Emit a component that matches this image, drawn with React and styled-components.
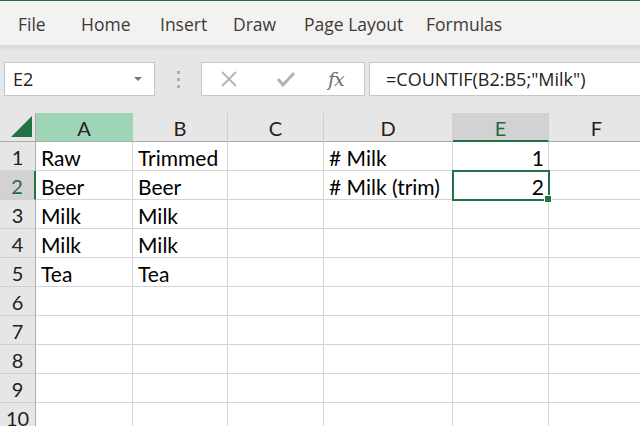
import React from "react";
import styled, { createGlobalStyle } from "styled-components";

const Global = createGlobalStyle`
  html, body { margin: 0; padding: 0; overflow: hidden; background: #fff; }
  body { font-family: "Open Sans", "Noto Sans", sans-serif; }
`;

const GREEN = "#217346";
const UI_FONT = `"Open Sans", "Noto Sans", sans-serif`;
const CELL_FONT = `Lato, "Liberation Sans", sans-serif`;

const Page = styled.div`
  width: 640px;
  height: 426px;
  overflow: hidden;
  display: flex;
  flex-direction: column;
`;

const Ribbon = styled.div`
  height: 44px;
  border-top: 1px solid ${GREEN};
  background: #f3f2f1;
  display: flex;
  align-items: center;
  padding-left: 18px;
  flex-shrink: 0;
`;

const Tab = styled.div`
  font-family: ${UI_FONT};
  font-size: 17.5px;
  color: #3b3a39;
  width: ${(p) => p.w}px;
  white-space: nowrap;
  padding-top: 2px;
`;

const Shade = styled.div`
  height: 5px;
  background: linear-gradient(#d6d6d6, #e3e3e3);
  flex-shrink: 0;
`;

const FormulaArea = styled.div`
  height: 63px;
  background: #e6e6e6;
  display: flex;
  align-items: flex-start;
  padding: 12px 0 0 4px;
  box-sizing: border-box;
  flex-shrink: 0;
`;

const Box = styled.div`
  height: 34px;
  box-sizing: border-box;
  background: #fff;
  border: 1px solid #c6c6c6;
  display: flex;
  align-items: center;
`;

const NameBox = styled(Box)`
  width: 151px;
  padding: 0 12px 0 8px;
  justify-content: space-between;
  font-family: ${UI_FONT};
  font-size: 18px;
  color: #222;
`;

const Caret = styled.div`
  width: 0;
  height: 0;
  border-left: 4px solid transparent;
  border-right: 4px solid transparent;
  border-top: 4px solid #777;
`;

const Dots = styled.div`
  width: 46px;
  height: 34px;
  display: flex;
  flex-direction: column;
  align-items: center;
  justify-content: center;
  gap: 4px;
  span {
    width: 3px;
    height: 3px;
    background: #acacac;
  }
`;

const FnBox = styled(Box)`
  width: 164px;
  padding-left: 18px;
`;

const IconSlot = styled.div`
  width: ${(p) => p.w}px;
  display: flex;
  align-items: center;
  justify-content: flex-start;
`;

const Fx = styled.span`
  font-family: "DejaVu Serif", "Liberation Serif", serif;
  font-style: italic;
  font-size: 19px;
  color: #6e6e6e;
  letter-spacing: -1px;
`;

const Input = styled(Box)`
  margin-left: 4px;
  flex: 1;
  border-right: none;
  padding-left: 16px;
  font-family: ${UI_FONT};
  font-size: 18px;
  color: #222;
  white-space: nowrap;
`;

const Grid = styled.div`
  display: grid;
  grid-template-columns: 36px 97px 95px 96px 129px 96px 96px;
  grid-auto-rows: 29px;
  grid-template-rows: 29px;
`;

const Corner = styled.div`
  background: #e6e6e6;
  border-right: 1px solid #ababab;
  border-bottom: 1px solid #ababab;
  box-sizing: border-box;
  display: flex;
  align-items: flex-end;
  justify-content: flex-end;
  padding: 0 3px 4px 0;
`;

const ColHead = styled.div`
  background: ${(p) => (p.active ? "#d2d2d2" : p.hl ? "#9fd5b7" : "#e6e6e6")};
  border-right: 1px solid ${(p) => (p.hl ? "#9fd5b7" : "#d0d0d0")};
  border-bottom: ${(p) => (p.active ? `2px solid ${GREEN}` : "1px solid #ababab")};
  box-sizing: border-box;
  display: flex;
  align-items: center;
  justify-content: center;
  font-family: ${CELL_FONT};
  font-size: 20px;
  color: ${(p) => (p.active ? "#1e6b40" : "#222")};
  padding-top: 2px;
`;

const RowHead = styled.div`
  background: ${(p) => (p.active ? "#d2d2d2" : "#e6e6e6")};
  border-right: ${(p) => (p.active ? `2px solid ${GREEN}` : "1px solid #ababab")};
  border-bottom: 1px solid #d0d0d0;
  box-sizing: border-box;
  display: flex;
  align-items: center;
  justify-content: center;
  font-family: ${CELL_FONT};
  font-size: 20px;
  color: ${(p) => (p.active ? "#1e6b40" : "#222")};
  padding-top: 2px;
`;

const Cell = styled.div`
  position: relative;
  border-right: 1px solid #d4d4d4;
  border-bottom: 1px solid #d4d4d4;
  box-sizing: border-box;
  display: flex;
  align-items: center;
  justify-content: ${(p) => (p.num ? "flex-end" : "flex-start")};
  padding: 2px ${(p) => (p.num ? 4 : 0)}px 0 ${(p) => (p.num ? 0 : 5)}px;
  font-family: ${CELL_FONT};
  font-size: 21px;
  color: #000;
  white-space: nowrap;
  ${(p) =>
    p.selected &&
    `
    outline: 2px solid ${GREEN};
    outline-offset: -1px;
    z-index: 2;
  `}
`;

const Handle = styled.div`
  position: absolute;
  right: -4px;
  bottom: -4px;
  width: 6px;
  height: 6px;
  background: ${GREEN};
  border: 1px solid #fff;
`;

const data = [
  ["Raw", "Trimmed", "", "# Milk", 1, ""],
  ["Beer", "Beer", "", "# Milk (trim)", 2, ""],
  ["Milk", "Milk", "", "", "", ""],
  ["Milk", "Milk", "", "", "", ""],
  ["Tea", "Tea", "", "", "", ""],
  ["", "", "", "", "", ""],
  ["", "", "", "", "", ""],
  ["", "", "", "", "", ""],
  ["", "", "", "", "", ""],
  ["", "", "", "", "", ""],
];

const cols = ["A", "B", "C", "D", "E", "F"];

export default function App() {
  return (
    <Page>
      <Global />
      <Ribbon>
        <Tab w={63}>File</Tab>
        <Tab w={79}>Home</Tab>
        <Tab w={73}>Insert</Tab>
        <Tab w={71}>Draw</Tab>
        <Tab w={122}>Page Layout</Tab>
        <Tab w={80}>Formulas</Tab>
      </Ribbon>
      <Shade />
      <FormulaArea>
        <NameBox>
          <span>E2</span>
          <Caret />
        </NameBox>
        <Dots>
          <span />
          <span />
          <span />
        </Dots>
        <FnBox>
          <IconSlot w={56}>
            <svg width="18" height="18" viewBox="0 0 18 18">
              <path d="M2 2 L16 16 M16 2 L2 16" stroke="#b3b3b3" strokeWidth="1.8" fill="none" />
            </svg>
          </IconSlot>
          <IconSlot w={52}>
            <svg width="20" height="18" viewBox="0 0 20 18">
              <path d="M2 9 L7 15 L18 3" stroke="#b3b3b3" strokeWidth="3" fill="none" />
            </svg>
          </IconSlot>
          <IconSlot w={30}>
            <Fx>fx</Fx>
          </IconSlot>
        </FnBox>
        <Input>=COUNTIF(B2:B5;"Milk")</Input>
      </FormulaArea>
      <Grid>
        <Corner>
          <svg width="21" height="21" viewBox="0 0 21 21">
            <path d="M21 0 L21 21 L0 21 Z" fill={GREEN} />
          </svg>
        </Corner>
        {cols.map((c) => (
          <ColHead key={c} hl={c === "A"} active={c === "E"}>
            {c}
          </ColHead>
        ))}
        {data.map((row, r) => (
          <React.Fragment key={r}>
            <RowHead active={r === 1}>{r + 1}</RowHead>
            {row.map((v, ci) => {
              const sel = r === 1 && ci === 4;
              return (
                <Cell key={ci} num={typeof v === "number"} selected={sel}>
                  {v}
                  {sel && <Handle />}
                </Cell>
              );
            })}
          </React.Fragment>
        ))}
      </Grid>
    </Page>
  );
}
